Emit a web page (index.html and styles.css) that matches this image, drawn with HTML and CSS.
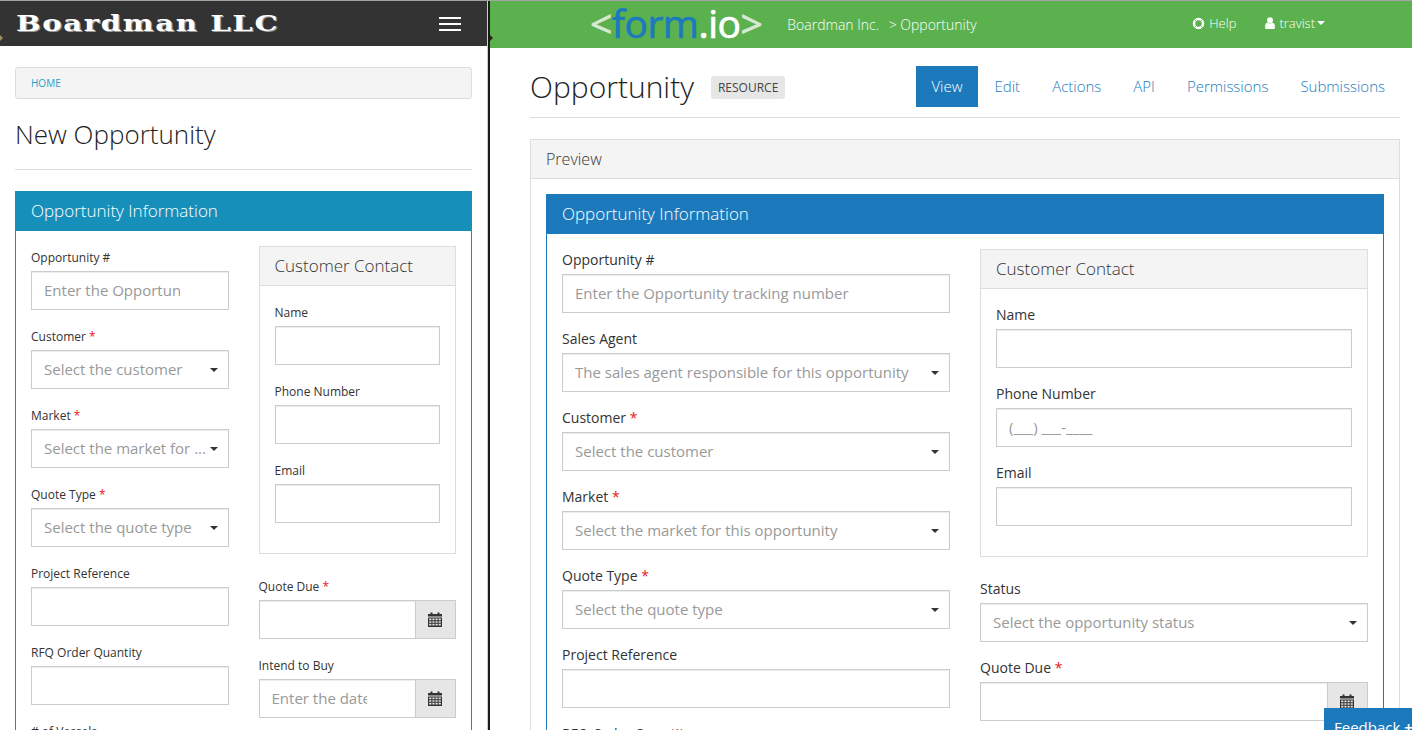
FILE: index.html
```html
<!DOCTYPE html>
<html lang="en">
<head>
    <meta charset="UTF-8">
    <title>Opportunity</title>
    <link rel="stylesheet" href="styles.css">
</head>
<body>
    <svg class="icon-defs" width="0" height="0">
        <symbol id="cal" viewBox="0 0 14 15">
            <path fill="currentColor" d="M0 2h2.5V0.6h2V2h5V0.6h2V2H14v2.6H0zM0 5.4h14V15H0zM1.2 6.6v1.6h2.2V6.6zm3.2 0v1.6h2.1V6.6zm3.1 0v1.6h2.1V6.6zm3.1 0v1.6h2.2V6.6zM1.2 9.2v1.6h2.2V9.2zm3.2 0v1.6h2.1V9.2zm3.1 0v1.6h2.1V9.2zm3.1 0v1.6h2.2V9.2zM1.2 11.8v1.8h2.2v-1.8zm3.2 0v1.8h2.1v-1.8zm3.1 0v1.8h2.1v-1.8zm3.1 0v1.8h2.2v-1.8z" fill-rule="evenodd"/>
        </symbol>
    </svg>

    <div class="split">
        <!-- left: the app -->
        <section class="pane pane-app">
            <header class="app-bar">
                <span class="brand">Boardman LLC</span>
                <span class="burger"><i></i><i></i><i></i></span>
            </header>
            <div class="app-content">
                <div class="crumb">HOME</div>
                <h1 class="app-title">New Opportunity</h1>
                <hr class="rule">
                <div class="form-panel teal">
                    <div class="form-panel-head">Opportunity Information</div>
                    <div class="form-cols">
                        <div class="col">
                            <div class="field"><label>Opportunity #</label><div class="input ph"><span class="clip">Enter the Opportunity tracking number</span></div></div>
                            <div class="field"><label>Customer <b>*</b></label><div class="input ph select"><span class="clip">Select the customer</span></div></div>
                            <div class="field"><label>Market <b>*</b></label><div class="input ph select"><span class="clip">Select the market for ...</span></div></div>
                            <div class="field"><label>Quote Type <b>*</b></label><div class="input ph select"><span class="clip">Select the quote type</span></div></div>
                            <div class="field"><label>Project Reference</label><div class="input"></div></div>
                            <div class="field"><label>RFQ Order Quantity</label><div class="input"></div></div>
                            <div class="field"><label># of Vessels</label><div class="input"></div></div>
                        </div>
                        <div class="col">
                            <div class="contact">
                                <div class="contact-head">Customer Contact</div>
                                <div class="contact-body">
                                    <div class="field"><label>Name</label><div class="input"></div></div>
                                    <div class="field"><label>Phone Number</label><div class="input"></div></div>
                                    <div class="field"><label>Email</label><div class="input"></div></div>
                                </div>
                            </div>
                            <div class="field"><label>Quote Due <b>*</b></label>
                                <div class="group"><div class="input"></div><span class="addon"><svg class="cal"><use href="#cal"/></svg></span></div>
                            </div>
                            <div class="field"><label>Intend to Buy</label>
                                <div class="group"><div class="input ph"><span class="clip">Enter the date you intend to buy</span></div><span class="addon"><svg class="cal"><use href="#cal"/></svg></span></div>
                            </div>
                        </div>
                    </div>
                </div>
            </div>
        </section>

        <div class="splitter"></div>

        <!-- right: the form.io portal -->
        <section class="pane pane-portal">
            <header class="portal-bar">
                <span class="logo"><span class="lg-br">&lt;</span><span class="lg-form">form</span><span class="lg-io">.io</span><span class="lg-br">&gt;</span></span>
                <span class="trail">Boardman Inc. <span class="trail-sep">&gt;</span> Opportunity</span>
                <span class="bar-right">
                    <span class="bar-link">
                        <svg class="ring" viewBox="0 0 14 14"><circle cx="7" cy="7" r="4.8" fill="none" stroke="currentColor" stroke-width="2.8"/><path d="M2.9 2.9l1.6 1.6M11.1 2.9L9.5 4.5M2.9 11.1l1.6-1.6M11.1 11.1L9.5 9.5" stroke="#5cb14f" stroke-width="1"/></svg>
                        Help
                    </span>
                    <span class="bar-link">
                        <svg class="user" viewBox="0 0 11 13"><circle cx="5.5" cy="3.4" r="3.2" fill="currentColor"/><path fill="currentColor" d="M0.2 12.2V9.4c0-2 1.2-3.2 2.6-3.2 1.6 1.1 3.8 1.1 5.4 0 1.4 0 2.6 1.2 2.6 3.2v2.8c0 .5-.4.8-.8.8H1c-.4 0-.8-.3-.8-.8z"/></svg>
                        <span>travist</span><i class="bar-caret"></i>
                    </span>
                </span>
            </header>
            <div class="portal-content">
                <div class="title-row">
                    <h1 class="portal-title">Opportunity</h1>
                    <span class="badge">RESOURCE</span>
                    <nav class="tabs">
                        <a class="tab active">View</a>
                        <a class="tab">Edit</a>
                        <a class="tab">Actions</a>
                        <a class="tab">API</a>
                        <a class="tab">Permissions</a>
                        <a class="tab">Submissions</a>
                    </nav>
                </div>
                <div class="preview">
                    <div class="preview-head">Preview</div>
                    <div class="preview-body">
                        <div class="form-panel blue">
                            <div class="form-panel-head">Opportunity Information</div>
                            <div class="form-cols">
                                <div class="col">
                                    <div class="field"><label>Opportunity #</label><div class="input ph">Enter the Opportunity tracking number</div></div>
                                    <div class="field"><label>Sales Agent</label><div class="input ph select">The sales agent responsible for this opportunity</div></div>
                                    <div class="field"><label>Customer <b>*</b></label><div class="input ph select">Select the customer</div></div>
                                    <div class="field"><label>Market <b>*</b></label><div class="input ph select">Select the market for this opportunity</div></div>
                                    <div class="field"><label>Quote Type <b>*</b></label><div class="input ph select">Select the quote type</div></div>
                                    <div class="field"><label>Project Reference</label><div class="input"></div></div>
                                    <div class="field"><label>RFQ Order Quantity</label><div class="input"></div></div>
                                </div>
                                <div class="col">
                                    <div class="contact">
                                        <div class="contact-head">Customer Contact</div>
                                        <div class="contact-body">
                                            <div class="field"><label>Name</label><div class="input"></div></div>
                                            <div class="field"><label>Phone Number</label><div class="input ph">(___) ___-____</div></div>
                                            <div class="field"><label>Email</label><div class="input"></div></div>
                                        </div>
                                    </div>
                                    <div class="field"><label>Status</label><div class="input ph select">Select the opportunity status</div></div>
                                    <div class="field"><label>Quote Due <b>*</b></label>
                                        <div class="group"><div class="input"></div><span class="addon"><svg class="cal"><use href="#cal"/></svg></span></div>
                                    </div>
                                </div>
                            </div>
                        </div>
                    </div>
                </div>
            </div>
            <div class="feedback">Feedback <b>+</b></div>
        </section>
    </div>
</body>
</html>
```

FILE: styles.css
```css
/* base */
html, body {
    height: 100%;
}

body {
    margin: 0;
    font-family: "Open Sans", sans-serif;
    font-size: 14px;
    color: #333;
    background: #fff;
    overflow: hidden;
}

.icon-defs {
    position: absolute;
}

.split {
    display: flex;
    height: 730px;
    border-top: 1px solid #a3a3a3;
    box-sizing: border-box;
}

.pane {
    position: relative;
    overflow: hidden;
    height: 100%;
}

/* little drag arrow on the left edge of each pane */
.pane::before {
    content: "";
    position: absolute;
    left: 0;
    top: 34px;
    border: 3px solid transparent;
    border-left-color: #2b2412;
    border-right: 0;
}

.pane-app {
    width: 487px;
    flex: none;
}

.pane-portal {
    flex: 1;
}

.splitter {
    width: 3px;
    flex: none;
    box-sizing: border-box;
    border-left: 1px solid #ccc;
    border-right: 2px solid #1a1a1a;
}

/* left pane header */
.app-bar {
    display: flex;
    align-items: center;
    justify-content: space-between;
    height: 45px;
    padding: 0 16px;
    background: #333;
}

.pane-app::before {
    border-left-color: #9c8f5e;
}

.brand {
    font-family: "DejaVu Serif", serif;
    font-weight: bold;
    font-size: 23px;
    line-height: 28px;
    margin-top: -2px;
    letter-spacing: 1.3px;
    color: #fff;
    text-shadow: 1px 1px 0 #999;
    white-space: nowrap;
    transform: scaleX(1.265);
    transform-origin: left center;
}

.burger {
    display: flex;
    flex-direction: column;
    gap: 4px;
    margin-right: 10px;
}

.burger i {
    display: block;
    width: 22px;
    height: 2px;
    background: #fff;
}

.app-content {
    padding: 21px 15px 0;
}

.crumb {
    height: 30px;
    line-height: 30px;
    padding: 0 15px;
    font-size: 10px;
    color: #2a9fc9;
    background: #f4f4f4;
    border: 1px solid #ddd;
    border-radius: 3px;
}

.app-title {
    margin: 18px 0 18px;
    font-size: 26px;
    line-height: 34px;
    font-weight: 300;
    color: #222;
}

.rule {
    margin: 0 0 21px;
    border: 0;
    border-top: 1px solid #ddd;
}

/* the form panel, used in both panes */
.form-panel {
    border: 1px solid;
    border-bottom: 0;
}

.form-panel.teal {
    border-color: #178fbb;
}

.form-panel.blue {
    border-color: #1c7abc;
}

.form-panel-head {
    height: 39px;
    line-height: 37px;
    padding: 0 15px;
    font-size: 17px;
    font-weight: 300;
    color: #fff;
}

.teal .form-panel-head {
    background: #178fbb;
}

.blue .form-panel-head {
    background: #1c7abc;
}

.form-cols {
    display: grid;
    grid-template-columns: minmax(0, 1fr) minmax(0, 1fr);
    column-gap: 30px;
    padding: 15px 15px 0;
}

.field label {
    display: block;
    height: 25px;
    line-height: 22px;
    color: #333;
}

.field label b {
    font-weight: normal;
    color: #e8141c;
}

.field {
    height: 79px;
}

.input {
    position: relative;
    box-sizing: border-box;
    height: 39px;
    line-height: 37px;
    padding: 0 12px;
    font-size: 15px;
    background: #fff;
    border: 1px solid #ccc;
    box-shadow: inset 0 1px 1px rgba(0, 0, 0, 0.08);
    white-space: nowrap;
    overflow: hidden;
}

.ph {
    color: #999;
}

.clip {
    display: block;
    overflow: hidden;
}

.select::after {
    content: "";
    position: absolute;
    right: 10px;
    top: 17px;
    border: 4px solid transparent;
    border-top-color: #333;
    border-bottom: 0;
}

.select {
    padding-right: 22px;
}

.group {
    display: flex;
}

.group .input {
    flex: 1;
    min-width: 0;
}

.addon {
    flex: none;
    display: flex;
    align-items: center;
    justify-content: center;
    box-sizing: border-box;
    width: 41px;
    height: 39px;
    margin-left: -1px;
    padding-right: 2px;
    color: #333;
    background: #e6e6e6;
    border: 1px solid #ccc;
}

.cal {
    width: 14px;
    height: 15px;
}

.contact {
    box-sizing: border-box;
    border: 1px solid #ddd;
    margin-bottom: 21px;
}

.contact-head {
    height: 38px;
    line-height: 38px;
    padding: 0 15px;
    font-size: 17px;
    font-weight: 300;
    background: #f4f4f4;
    border-bottom: 1px solid #ddd;
}

.contact-body {
    padding: 15px 15px 0;
    height: 267px;
    box-sizing: border-box;
}

/* left pane is a narrower phone-ish view */
.pane-app .field label {
    font-size: 12px;
    line-height: 24px;
}

.pane-app .input:not(.select) .clip {
    margin-right: 36px;
}

/* right pane header */
.portal-bar {
    display: flex;
    align-items: center;
    height: 47px;
    padding: 0 87px 3px 100px;
    box-sizing: border-box;
    background: #5cb14f;
    color: #fff;
}

.logo {
    font-size: 39px;
    line-height: 44px;
    letter-spacing: -0.5px;
    margin-right: 25px;
    -webkit-text-stroke: 0.7px;
}

.lg-br {
    color: #d8e8d4;
}

.lg-form {
    color: #1c7abc;
}

.lg-io {
    color: #fff;
}

.trail {
    font-weight: 300;
    font-size: 14px;
    margin-top: 3px;
}

.trail-sep {
    margin-left: 6px;
}

.bar-right {
    margin-left: auto;
    display: flex;
    gap: 29px;
    font-weight: 300;
    font-size: 13px;
}

.bar-link {
    display: flex;
    align-items: center;
    gap: 4px;
}

.ring {
    width: 13px;
    height: 13px;
}

.user {
    width: 10px;
    height: 12px;
}

.bar-caret {
    margin-left: -2px;
    border: 4px solid transparent;
    border-top-color: #fff;
    border-bottom: 0;
}

.portal-content {
    padding: 18px 12px 0 40px;
}

.title-row {
    display: flex;
    align-items: flex-start;
    height: 51px;
    border-bottom: 1px solid #ddd;
}

.portal-title {
    margin: 0;
    font-size: 30px;
    line-height: 42px;
    font-weight: 300;
    color: #222;
}

.badge {
    margin: 10px 0 0 17px;
    height: 23px;
    line-height: 23px;
    padding: 0 7px;
    font-size: 12px;
    color: #444;
    background: #e6e6e6;
    border-radius: 3px;
}

.tabs {
    margin-left: auto;
    display: flex;
    gap: 2px;
}

.tab {
    height: 41px;
    line-height: 41px;
    padding: 0 15px;
    font-size: 15px;
    color: #1c7abc;
    font-weight: 300;
}

.tab.active {
    color: #fff;
    background: #1c7abc;
}

.preview {
    margin-top: 21px;
    border: 1px solid #ddd;
    border-bottom: 0;
}

.preview-head {
    height: 38px;
    line-height: 38px;
    padding: 0 15px;
    font-size: 16px;
    font-weight: 300;
    background: #f4f4f4;
    border-bottom: 1px solid #ddd;
}

.preview-body {
    padding: 15px;
}

.feedback {
    position: absolute;
    right: 0;
    top: 707px;
    width: 88px;
    height: 30px;
    line-height: 38px;
    padding-left: 10px;
    box-sizing: border-box;
    font-size: 15px;
    white-space: nowrap;
    overflow: hidden;
    color: #fff;
    background: #1c7abc;
}
```
